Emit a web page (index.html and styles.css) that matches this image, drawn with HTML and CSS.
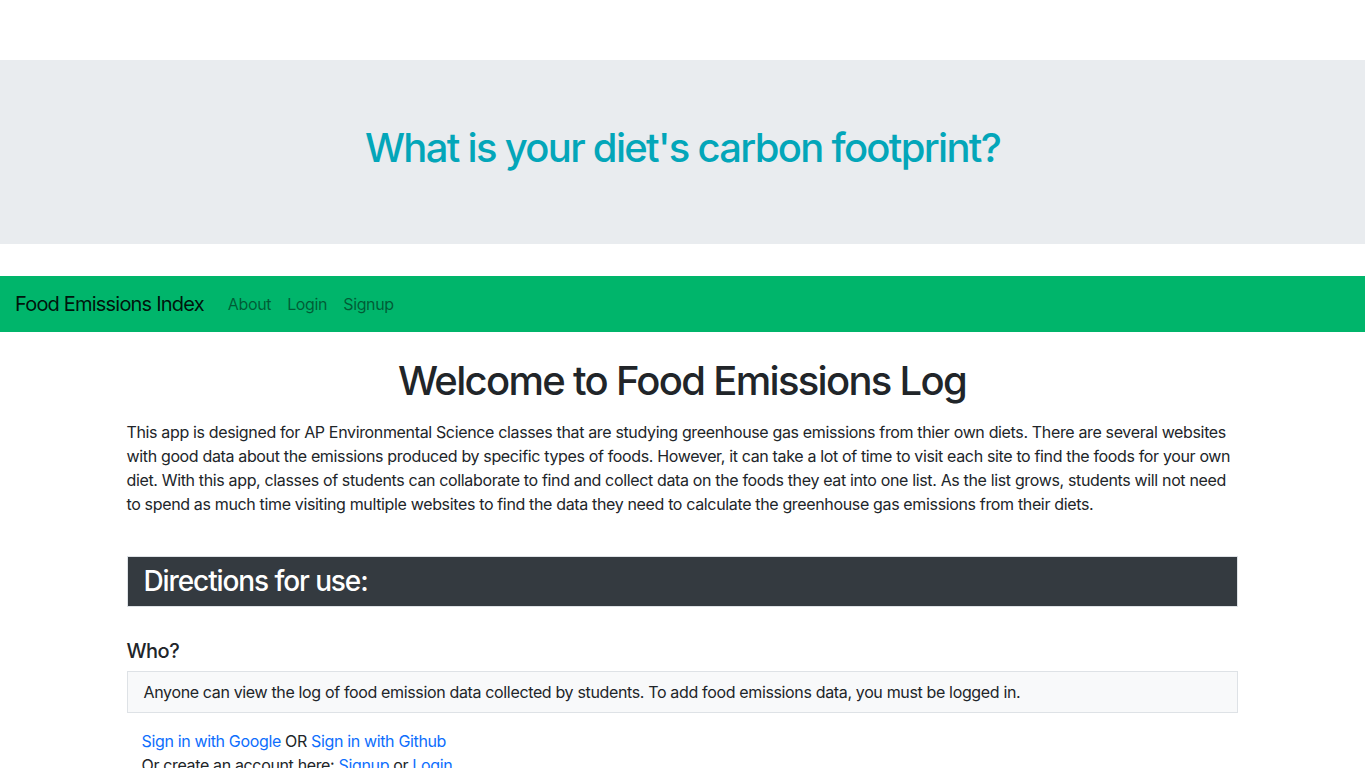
FILE: index.html
```html
<!DOCTYPE html>
<html lang="en">
<head>
<meta charset="utf-8">
<title>Food Emissions Log</title>
<link rel="stylesheet" href="styles.css">
</head>
<body>
<div class="top-space"></div>
<header class="jumbotron">
  <h1 class="jumbo-title">What is your diet's carbon footprint?</h1>
</header>
<nav class="navbar">
  <a class="brand" href="#">Food Emissions Index</a>
  <ul class="nav-links">
    <li><a href="#">About</a></li>
    <li><a href="#">Login</a></li>
    <li><a href="#">Signup</a></li>
  </ul>
</nav>
<main class="container">
  <h1 class="welcome">Welcome to Food Emissions Log</h1>
  <p class="intro">This app is designed for AP Environmental Science classes that are studying greenhouse gas emissions from thier own diets. There are several websites with good data about the emissions produced by specific types of foods. However, it can take a lot of time to visit each site to find the foods for your own diet. With this app, classes of students can collaborate to find and collect data on the foods they eat into one list. As the list grows, students will not need to spend as much time visiting multiple websites to find the data they need to calculate the greenhouse gas emissions from their diets.</p>
  <section class="directions">
    <h2 class="directions-title">Directions for use:</h2>
  </section>
  <h4 class="sub">Who?</h4>
  <div class="note">Anyone can view the log of food emission data collected by students. To add food emissions data, you must be logged in.</div>
  <div class="signin">
    <div><a href="#">Sign in with Google</a> OR <a href="#">Sign in with Github</a></div>
    <div>Or create an account here: <a href="#">Signup</a> or <a href="#">Login</a></div>
  </div>
</main>
</body>
</html>
```
FILE: styles.css
```css
* { box-sizing: border-box; }
html, body { margin: 0; padding: 0; }
body {
  font-family: Inter, "Noto Sans", sans-serif;
  font-size: 16px;
  line-height: 1.5;
  letter-spacing: -0.35px;
  color: #212529;
  background: #fff;
}
a { color: #0d6efd; text-decoration: none; }
.top-space { height: 60px; }
.jumbotron {
  background: #e9ecef;
  padding: 64px 32px;
  margin-bottom: 32px;
}
.jumbo-title {
  margin: 0 0 8px;
  text-align: center;
  font-size: 40px;
  font-weight: 500;
  line-height: 1.2;
  letter-spacing: -1.7px;
  color: #03a6b9;
}
.navbar {
  display: flex;
  align-items: center;
  background: #00b56b;
  padding: 8px 15px;
  height: 56px;
}
.brand {
  color: rgba(0,0,0,.9);
  font-size: 20px;
  line-height: 30px;
  letter-spacing: -0.8px;
  margin-right: 16px;
}
.nav-links {
  display: flex;
  list-style: none;
  margin: 0;
  padding: 0;
}
.nav-links a {
  display: block;
  padding: 8px;
  color: rgba(0,0,0,.5);
}
.container {
  width: 1142px;
  margin: 0 auto;
  padding: 0 16px 0 15px;
}
.welcome {
  text-align: center;
  font-size: 40px;
  font-weight: 500;
  line-height: 1.2;
  letter-spacing: -1.7px;
  margin: 25px 0 15px;
}
.intro { margin: 0 0 40px; }
.directions {
  background: #343a40;
  border: 1px solid #dee2e6;
  padding: 7px 16px;
}
.directions-title {
  margin: 0;
  color: #fff;
  font-size: 28px;
  font-weight: 500;
  line-height: 35px;
  letter-spacing: -1.1px;
}
.sub {
  font-size: 20px;
  font-weight: 500;
  line-height: 24px;
  letter-spacing: -0.5px;
  margin: 32px 0 8px;
}
.note {
  background: #f8f9fa;
  border: 1px solid #dee2e6;
  padding: 8px 16px;
}
.signin {
  margin-top: 16px;
  padding-left: 15px;
}
```
